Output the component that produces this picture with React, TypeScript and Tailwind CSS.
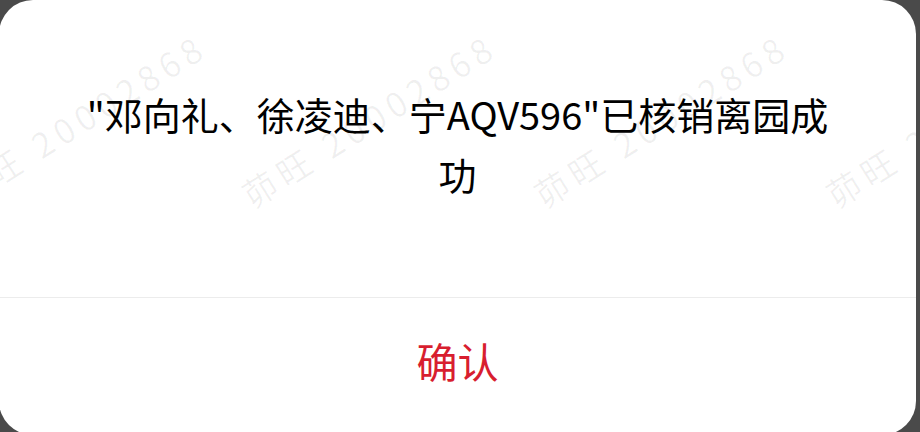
const marks = [
  "left-[-35px]",
  "left-[255px]",
  "left-[547px]",
  "left-[839px]",
];

function Watermark({ pos }: { pos: string }) {
  return (
    <span
      className={`pointer-events-none absolute top-[178px] ${pos} origin-bottom-left -rotate-[32deg] whitespace-nowrap text-[34px] leading-none tracking-[6px] text-black/[0.06] select-none`}
    >
      茆旺 20002868
    </span>
  );
}

export default function App() {
  return (
    <div
      className="h-[432px] overflow-hidden bg-[#4a4a4a]"
      style={{ fontFamily: '"Noto Sans CJK SC", "Noto Sans", sans-serif' }}
    >
      <div className="relative -ml-px flex h-[435px] w-[917px] flex-col overflow-hidden rounded-[34px] bg-white">
        <div className="flex h-[297px] items-center justify-center px-[78px] pb-[10px] text-center text-[38px] leading-[60px] text-black">
          <p>"邓向礼、徐凌迪、宁AQV596"已核销离园成功</p>
        </div>
        <div className="h-px bg-[#ececec]" />
        <button className="flex flex-1 items-center justify-center pb-3 text-[41px] text-[#d81e2f]">
          确认
        </button>
        {marks.map((m) => (
          <Watermark key={m} pos={m} />
        ))}
      </div>
    </div>
  );
}
